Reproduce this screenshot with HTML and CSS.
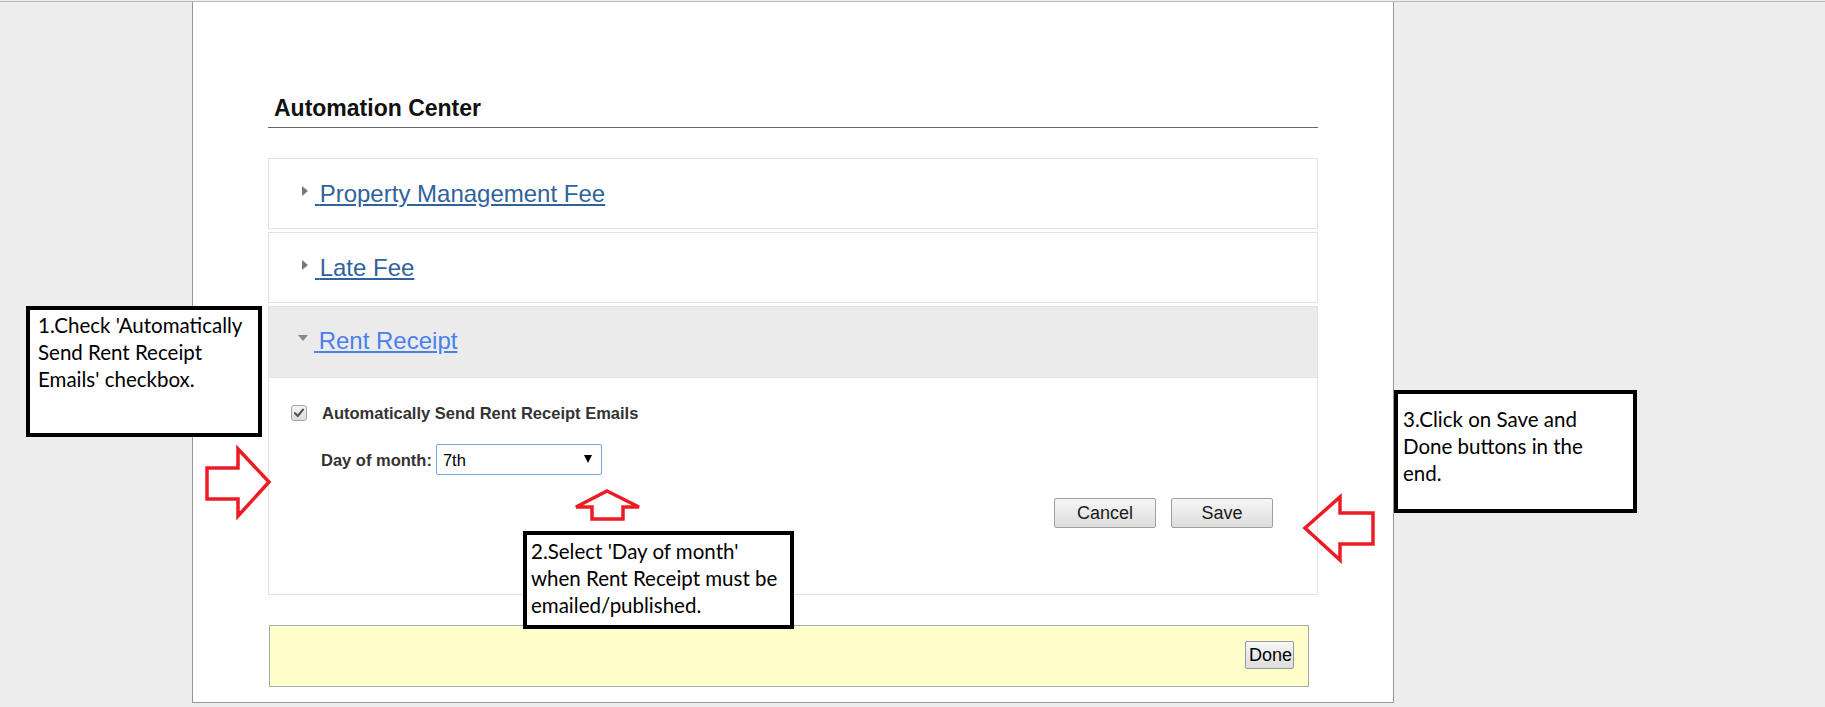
FILE: index.html
```html
<!DOCTYPE html>
<html lang="en">
<head>
  <meta charset="UTF-8" />
  <title>Automation Center</title>
  <link rel="stylesheet" href="styles.css">
</head>
<body>

<div class="frame">
  <div class="sheet">
    <h2 class="title">Automation Center</h2>

    <div class="accordion">
      <div class="panel">
        <div class="panel-head"><span class="caret caret-right"></span><a href="#"><span class="lead">&nbsp;</span>Property Management Fee</a></div>
      </div>
      <div class="panel">
        <div class="panel-head"><span class="caret caret-right"></span><a href="#"><span class="lead">&nbsp;</span>Late Fee</a></div>
      </div>
      <div class="panel open">
        <div class="panel-head"><span class="caret caret-down"></span><a href="#"><span class="lead">&nbsp;</span>Rent Receipt</a></div>
        <div class="panel-body">
          <label class="check-row">
            <span class="checkbox">
              <svg width="14" height="14" viewBox="0 0 14 14"><path d="M3 7.2 L5.8 10 L11 3.6" fill="none" stroke="#555" stroke-width="2.2" stroke-linecap="round" stroke-linejoin="round"/></svg>
            </span>
            <span>Automatically Send Rent Receipt Emails</span>
          </label>
          <div class="day-row">
            <label for="day">Day of month:</label>
            <span class="select-wrap">
              <select id="day">
                <option>7th</option>
              </select>
              <span class="select-arrow"></span>
            </span>
          </div>
          <div class="actions">
            <button class="btn">Cancel</button>
            <button class="btn">Save</button>
          </div>
        </div>
      </div>
    </div>

    <div class="done-bar">
      <button class="done-btn">Done</button>
    </div>
  </div>
</div>

<!-- annotation callouts -->
<div class="note note-1">1.Check 'Automatically<br>Send Rent Receipt<br>Emails' checkbox.</div>
<div class="note note-2">2.Select 'Day of month'<br>when Rent Receipt must be<br>emailed/published.</div>
<div class="note note-3">3.Click on Save and<br>Done buttons in the<br>end.</div>

<svg class="arrows" width="1825" height="707" viewBox="0 0 1825 707">
  <polygon points="207,468 238,468 238,449 269,482 238,516 238,499 207,499" />
  <polygon points="607,491 639,507 623,507 623,519 592,519 592,507 576,507" />
  <polygon points="1305,528 1340,497 1340,513 1373,513 1373,544 1340,544 1340,560" />
</svg>

</body>
</html>
```

FILE: styles.css
```css
body {
  margin: 0;
  background: #ededed;
  font-family: "Liberation Sans", Arial, sans-serif;
  height: 707px;
  overflow: hidden;
  position: relative;
}

.frame {
  margin-top: 1px;
  border-top: 1px solid #bbb;
}

.sheet {
  box-sizing: border-box;
  margin-left: 192px;
  width: 1202px;
  height: 701px;
  padding: 92px 75px 0;
  background: #fff;
  border: 1px solid #999;
  border-top: none;
}

.title {
  margin: 0;
  padding: 0 0 5px 6px;
  font-size: 23px;
  line-height: 28px;
  font-weight: bold;
  color: #111;
  border-bottom: 1px solid #666;
}

.accordion {
  margin-top: 30px;
}

.panel {
  border: 1px solid #e2e2e2;
  margin-bottom: 3px;
}

.panel-head {
  display: flex;
  align-items: flex-start;
  padding: 21px 0 20px 33px;
  font-size: 24px;
  line-height: 28px;
}

.panel-head a {
  color: #30639c;
  text-decoration: underline;
}

.panel-head .lead {
  letter-spacing: -2px;
}

.caret {
  width: 0;
  height: 0;
}

.caret-right {
  margin: 6px 7px 0 0;
  border-top: 5px solid transparent;
  border-bottom: 5px solid transparent;
  border-left: 6px solid #777;
}

.caret-down {
  margin: 8px 6px 0 0;
  border-left: 5.5px solid transparent;
  border-right: 5.5px solid transparent;
  border-top: 6px solid #888;
}

/* panel abierto */
.panel.open {
  margin-bottom: 0;
}

.panel.open .panel-head {
  background: #ebebeb;
  padding: 20px 0 22px 29px;
  border-bottom: 1px solid #e3e3e3;
}

.panel.open .panel-head a {
  color: #4a80ee;
}

.panel-body {
  padding: 25px 44px 66px 22px;
  font-size: 16.5px;
  color: #333;
}

.check-row {
  display: flex;
  align-items: center;
  height: 20px;
  font-weight: bold;
  line-height: 20px;
}

.checkbox {
  box-sizing: border-box;
  width: 16px;
  height: 16px;
  margin-right: 15px;
  border: 1px solid #a3a3a3;
  border-radius: 3px;
  background: linear-gradient(#f4f4f4, #dcdcdc);
  display: flex;
  align-items: center;
  justify-content: center;
}

.day-row {
  display: flex;
  align-items: center;
  margin-top: 21px;
  padding-left: 30px;
  font-weight: bold;
  line-height: 20px;
}

.select-wrap {
  position: relative;
  margin-left: 4px;
}

.select-wrap select {
  appearance: none;
  -webkit-appearance: none;
  box-sizing: border-box;
  width: 166px;
  height: 31px;
  padding: 0 6px;
  border: 1px solid #7ba7de;
  border-radius: 2px;
  background: #fff;
  color: #000;
  font-family: "Liberation Sans", Arial, sans-serif;
  font-size: 16.5px;
  display: block;
}

.select-arrow {
  position: absolute;
  top: 11px;
  right: 10px;
  width: 0;
  height: 0;
  border-left: 4px solid transparent;
  border-right: 4px solid transparent;
  border-top: 8px solid #000;
}

.actions {
  display: flex;
  justify-content: flex-end;
  gap: 15px;
  margin-top: 23px;
}

.btn, .done-btn {
  box-sizing: border-box;
  font-family: "Liberation Sans", Arial, sans-serif;
  font-size: 18px;
  color: #1a1a1a;
  border: 1px solid #a0a0a0;
  border-radius: 2px;
  background: linear-gradient(#f6f6f6, #dddddd);
  cursor: pointer;
}

.btn {
  width: 102px;
  height: 30px;
  padding: 0;
}

.done-bar {
  box-sizing: border-box;
  width: 1040px;
  height: 62px;
  margin: 30px 0 0 1px;
  padding: 0 14px 2px 0;
  background: #ffffcc;
  border: 1px solid #aaa;
  display: flex;
  justify-content: flex-end;
  align-items: center;
}

.done-btn {
  width: 49px;
  height: 28px;
  padding: 0 3px 1px;
  line-height: 24px;
  color: #000;
  border-color: #999;
}

/* notas encima */
.note {
  position: absolute;
  box-sizing: border-box;
  background: #fff;
  border: 4px solid #000;
  font-family: Lato, "Open Sans", sans-serif;
  font-size: 20.5px;
  line-height: 27px;
  color: #000;
  white-space: nowrap;
}

.note-1 {
  left: 26px;
  top: 306px;
  width: 236px;
  height: 131px;
  padding: 2px 8px;
}

.note-2 {
  left: 523px;
  top: 531px;
  width: 271px;
  height: 98px;
  padding: 3px 4px;
}

.note-3 {
  left: 1394px;
  top: 390px;
  width: 243px;
  height: 123px;
  padding: 12px 5px;
}

.arrows {
  position: absolute;
  left: 0;
  top: 0;
  pointer-events: none;
}

.arrows polygon {
  fill: none;
  stroke: #ed1c24;
  stroke-width: 3.5;
  stroke-linejoin: miter;
}
```
